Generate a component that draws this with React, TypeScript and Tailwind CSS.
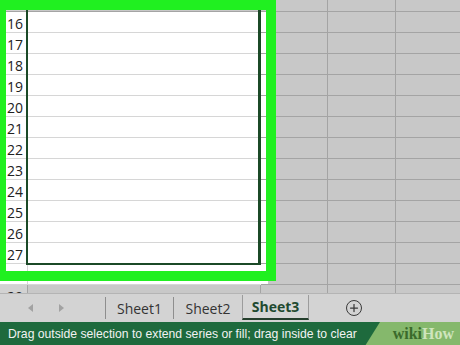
import { FiPlus } from "react-icons/fi";

const rows = [15, 16, 17, 18, 19, 20, 21, 22, 23, 24, 25, 26, 27, 28, 29];

function Row({ n }: { n: number }) {
    const lit = n >= 16 && n <= 28;
    const h = n === 15 ? "h-[12px]" : "h-[21px]";

    return (
        <div className={`flex ${h} shrink-0`}>
            <div className={`w-[28px] shrink-0 flex items-center pl-[7px] pt-[3px] text-[14px] text-[#222] border-r border-b ${lit ? "bg-white border-b-[#d6d6d6] border-r-[#d6d6d6]" : "bg-[#d2d2d2] border-[#a4a4a4]"}`}>
                {n === 15 ? "" : n}
            </div>
            <div className={`w-[233px] shrink-0 border-b border-r ${lit ? "bg-white border-b-[#d6d6d6] border-r-white" : "bg-[#c8c8c8] border-[#a4a4a4]"}`} />
            <div className="w-[67px] shrink-0 flex bg-[#c8c8c8] border-b border-r border-[#a4a4a4]">
                {lit && <div className="w-[7px] bg-white" />}
            </div>
            <div className="w-[68px] shrink-0 bg-[#c8c8c8] border-b border-r border-[#a4a4a4]" />
            <div className="flex-1 bg-[#c8c8c8] border-b border-[#a4a4a4]" />
        </div>
    );
}

export default function App() {
    return (
        <div className="w-[460px] h-[345px] overflow-hidden flex flex-col bg-[#c8c8c8] font-['Open_Sans','Noto_Sans',sans-serif]">
            {/* sheet */}
            <div className="relative h-[293px] shrink-0 overflow-hidden flex flex-col">
                {rows.map((n) => <Row key={n} n={n} />)}

                {/* selection */}
                <div className="absolute left-[26px] top-[-5px] w-[235px] h-[270px] border-l-2 border-r-[3px] border-b-2 border-[#1b4a27]" />
                {/* green highlight frame */}
                <div className="absolute left-[-4px] top-0 w-[280px] h-[281px] border-[10px] border-[#20f020]" />
            </div>

            {/* sheet tabs */}
            <div className="h-[29px] shrink-0 flex bg-[#d3d3d3] border-t border-[#b4b4b4] text-[14px] text-[#333]">
                <div className="w-[105px] shrink-0 flex items-center pl-[28px] gap-[26px]">
                    <svg width="5" height="8" viewBox="0 0 5 8"><path d="M5 0 L0 4 L5 8 Z" fill="#a2a2a2" /></svg>
                    <svg width="5" height="8" viewBox="0 0 5 8"><path d="M0 0 L5 4 L0 8 Z" fill="#a2a2a2" /></svg>
                </div>
                <div className="w-px my-[3px] bg-[#8e8e8e]" />
                <div className="w-[67px] flex items-center justify-center">Sheet1</div>
                <div className="w-px my-[3px] bg-[#8e8e8e]" />
                <div className="w-[68px] flex items-center justify-center">Sheet2</div>
                <div className="w-[67px] mt-[1px] mb-[2px] flex items-center justify-center bg-[#d6d6d6] border-x border-[#9c9c9c] border-b-2 border-b-[#243f2c] font-bold text-[#1f4a30]">
                    Sheet3
                </div>
                <div className="w-[90px] flex items-center justify-center">
                    <div className="w-[16px] h-[16px] rounded-full border-[1.5px] border-[#3a3a3a] flex items-center justify-center">
                        <FiPlus size={12} strokeWidth={2.5} className="text-[#3a3a3a]" />
                    </div>
                </div>
            </div>

            {/* status bar */}
            <div className="flex-1 flex items-center bg-[#1e6a3d] text-[#f2f2f2]">
                <span className="pl-[8px] text-[12.2px] whitespace-nowrap font-['Liberation_Sans',sans-serif]">
                    Drag outside selection to extend series or fill; drag inside to clear
                </span>
                <div className="ml-auto w-[95px] self-stretch flex items-center justify-end pr-[6px] bg-[#85b86c] [clip-path:polygon(15px_0,100%_0,100%_100%,0_100%)] font-['Liberation_Serif',serif] font-bold text-[16px]">
                    <span className="text-[#3a6a2b]">wiki</span>
                    <span className="text-[#cfe5bd]">How</span>
                </div>
            </div>
        </div>
    );
}
